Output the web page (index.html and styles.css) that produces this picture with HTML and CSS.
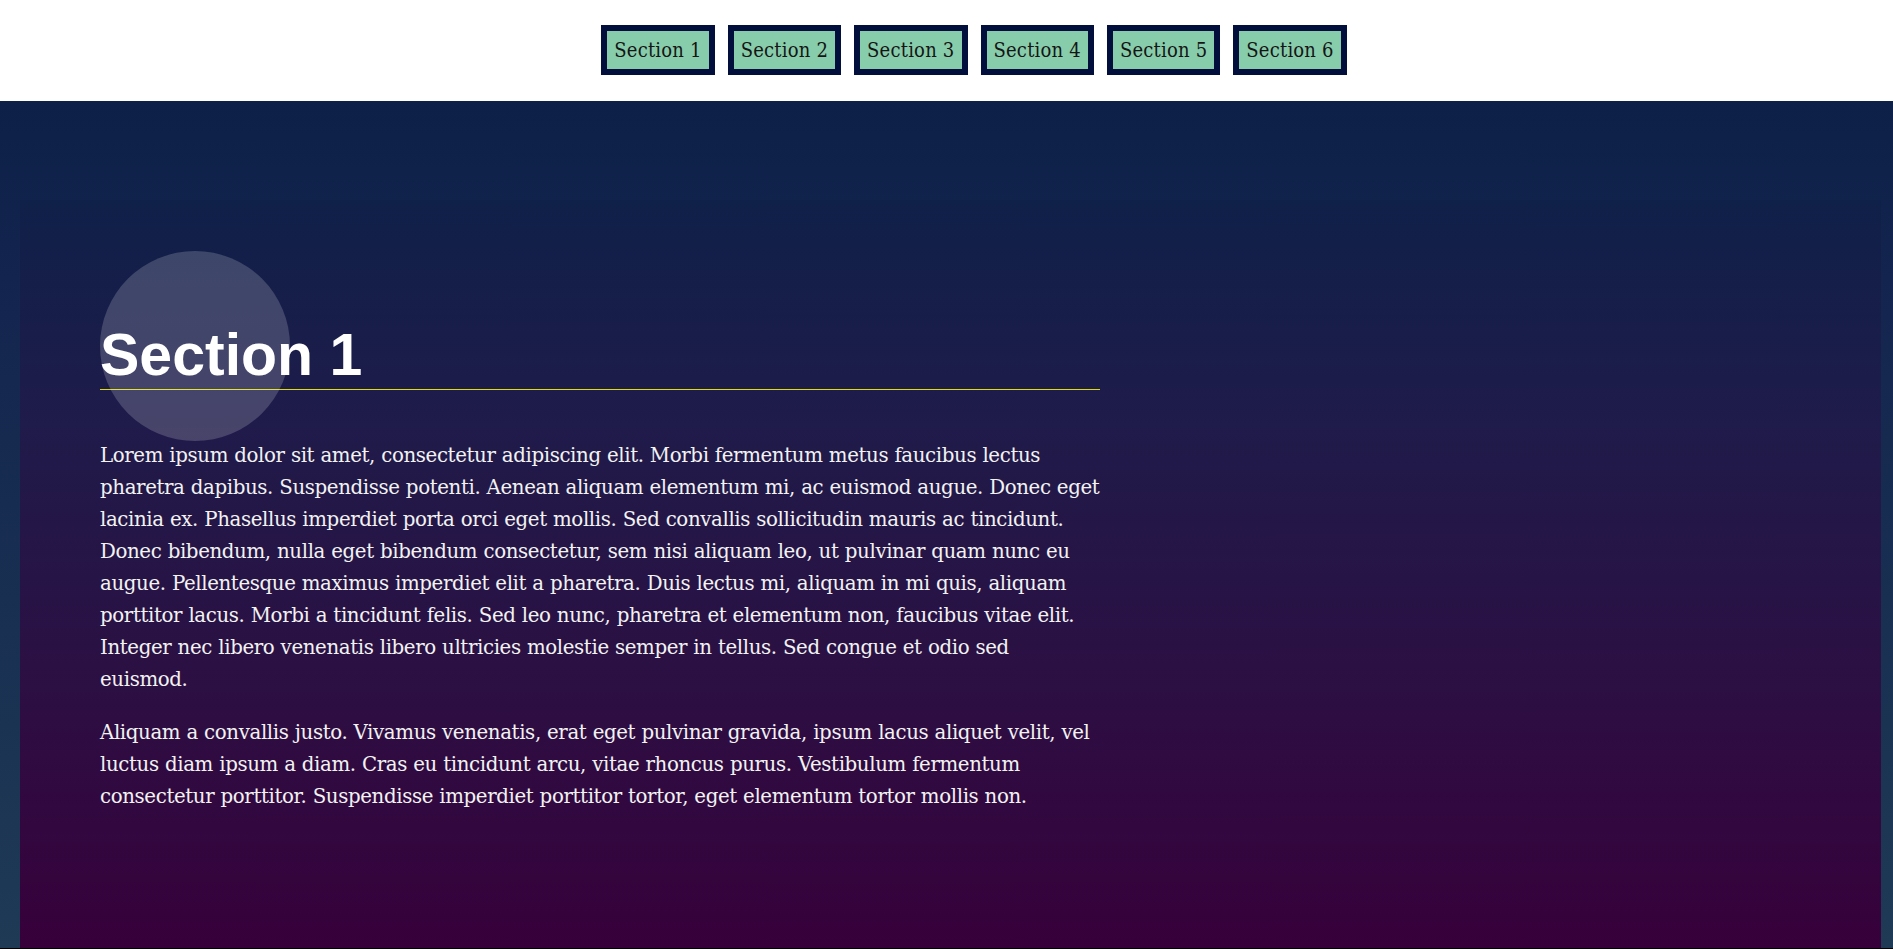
FILE: index.html
```html
<!DOCTYPE html>
<html lang="en">
<head>
<meta charset="utf-8">
<title>Sections</title>
<link rel="stylesheet" href="styles.css">
</head>
<body>
<header class="site-header">
  <nav class="nav">
    <a class="nav-link" href="#s1">Section 1</a>
    <a class="nav-link" href="#s2">Section 2</a>
    <a class="nav-link" href="#s3">Section 3</a>
    <a class="nav-link" href="#s4">Section 4</a>
    <a class="nav-link" href="#s5">Section 5</a>
    <a class="nav-link" href="#s6">Section 6</a>
  </nav>
</header>
<main class="page">
  <section class="section" id="s1">
    <div class="content">
      <h2 class="section-title">Section 1</h2>
      <p class="text">Lorem ipsum dolor sit amet, consectetur adipiscing elit. Morbi fermentum metus faucibus lectus pharetra dapibus. Suspendisse potenti. Aenean aliquam elementum mi, ac euismod augue. Donec eget lacinia ex. Phasellus imperdiet porta orci eget mollis. Sed convallis sollicitudin mauris ac tincidunt. Donec bibendum, nulla eget bibendum consectetur, sem nisi aliquam leo, ut pulvinar quam nunc eu augue. Pellentesque maximus imperdiet elit a pharetra. Duis lectus mi, aliquam in mi quis, aliquam porttitor lacus. Morbi a tincidunt felis. Sed leo nunc, pharetra et elementum non, faucibus vitae elit. Integer nec libero venenatis libero ultricies molestie semper in tellus. Sed congue et odio sed euismod.</p>
      <p class="text">Aliquam a convallis justo. Vivamus venenatis, erat eget pulvinar gravida, ipsum lacus aliquet velit, vel luctus diam ipsum a diam. Cras eu tincidunt arcu, vitae rhoncus purus. Vestibulum fermentum consectetur porttitor. Suspendisse imperdiet porttitor tortor, eget elementum tortor mollis non.</p>
    </div>
  </section>
</main>
</body>
</html>
```
FILE: styles.css
```css
html, body {
  margin: 0;
  padding: 0;
  height: 100%;
}
body {
  display: flex;
  flex-direction: column;
  background: #ffffff;
  font-family: "DejaVu Serif", serif;
}
.site-header {
  height: 101px;
  flex: 0 0 101px;
  background: #ffffff;
  display: flex;
  align-items: center;
  justify-content: center;
  padding-left: 55px;
  box-sizing: border-box;
}
.nav {
  display: flex;
  gap: 13px;
  margin-top: -2px;
}
.nav-link {
  display: block;
  background: #88cdab;
  border: 6px solid #020e3b;
  padding: 8px 7px;
  font-family: "DejaVu Serif", serif;
  font-stretch: condensed;
  font-size: 20px;
  line-height: 22px;
  letter-spacing: 0.2px;
  color: #151515;
  text-decoration: none;
}
.page {
  flex: 1;
  display: flex;
  flex-direction: column;
  padding: 99px 12px 0 20px;
  background: linear-gradient(to bottom, #0d2048 0%, #14264f 25%, #1e3a55 100%);
  border-bottom: 1px solid #000;
  box-sizing: border-box;
}
.section {
  flex: 1;
  background: linear-gradient(to bottom, #0f2049 0%, #1f1b4a 30%, #2c0f43 65%, #37003b 100%);
  padding: 121px 80px 0 80px;
}
.content {
  max-width: 1000px;
  color: #f2f2f2;
}
.section-title {
  position: relative;
  margin: 0 0 50px;
  font-family: "Liberation Sans", Arial, sans-serif;
  font-weight: bold;
  font-size: 59px;
  line-height: normal;
  color: #ffffff;
  border-bottom: 1px solid #dede00;
}
.section-title::before {
  content: "";
  position: absolute;
  left: 0;
  top: -70px;
  width: 190px;
  height: 190px;
  border-radius: 50%;
  background: rgba(255, 255, 255, 0.18);
}
.text {
  margin: 0 0 21px;
  font-family: "DejaVu Serif", serif;
  font-size: 19.8px;
  line-height: 32px;
  letter-spacing: -0.38px;
  word-spacing: 0.33px;
}
```
